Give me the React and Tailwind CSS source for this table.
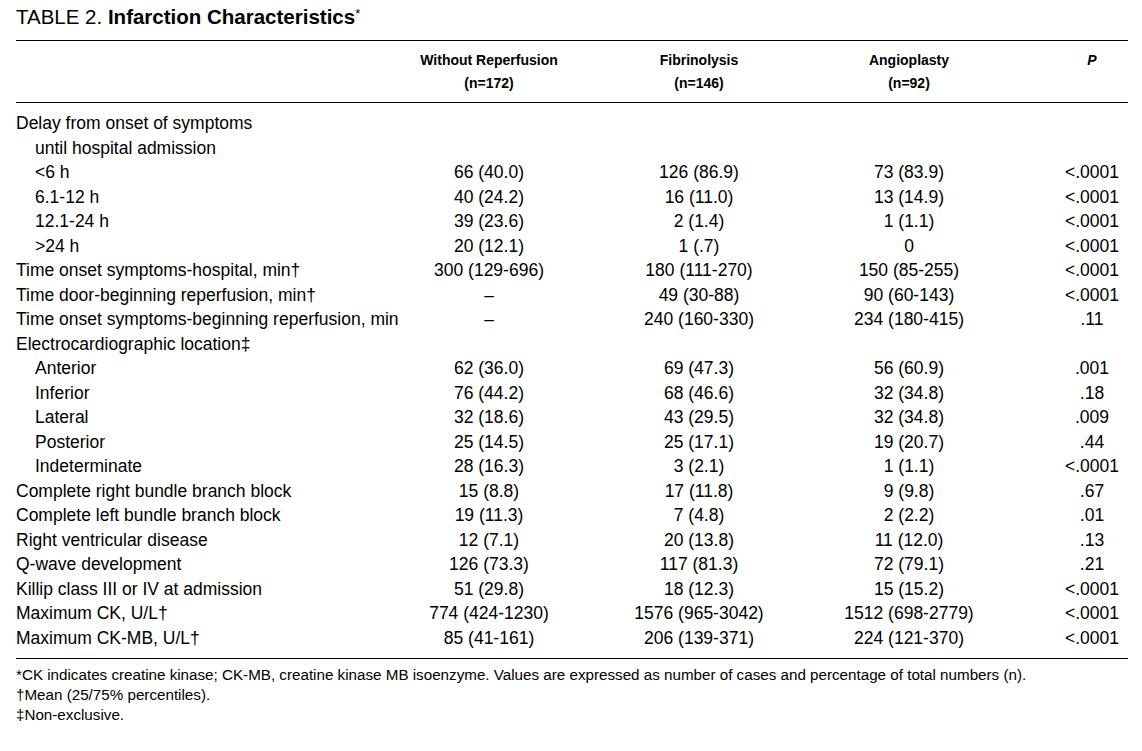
const ROWS = [
  { label: "Delay from onset of symptoms" },
  { label: "until hospital admission", indent: true },
  { label: "<6 h", indent: true, v: ["66 (40.0)", "126 (86.9)", "73 (83.9)", "<.0001"] },
  { label: "6.1-12 h", indent: true, v: ["40 (24.2)", "16 (11.0)", "13 (14.9)", "<.0001"] },
  { label: "12.1-24 h", indent: true, v: ["39 (23.6)", "2 (1.4)", "1 (1.1)", "<.0001"] },
  { label: ">24 h", indent: true, v: ["20 (12.1)", "1 (.7)", "0", "<.0001"] },
  { label: "Time onset symptoms-hospital, min†", v: ["300 (129-696)", "180 (111-270)", "150 (85-255)", "<.0001"] },
  { label: "Time door-beginning reperfusion, min†", v: ["–", "49 (30-88)", "90 (60-143)", "<.0001"] },
  { label: "Time onset symptoms-beginning reperfusion, min", v: ["–", "240 (160-330)", "234 (180-415)", ".11"] },
  { label: "Electrocardiographic location‡" },
  { label: "Anterior", indent: true, v: ["62 (36.0)", "69 (47.3)", "56 (60.9)", ".001"] },
  { label: "Inferior", indent: true, v: ["76 (44.2)", "68 (46.6)", "32 (34.8)", ".18"] },
  { label: "Lateral", indent: true, v: ["32 (18.6)", "43 (29.5)", "32 (34.8)", ".009"] },
  { label: "Posterior", indent: true, v: ["25 (14.5)", "25 (17.1)", "19 (20.7)", ".44"] },
  { label: "Indeterminate", indent: true, v: ["28 (16.3)", "3 (2.1)", "1 (1.1)", "<.0001"] },
  { label: "Complete right bundle branch block", v: ["15 (8.8)", "17 (11.8)", "9 (9.8)", ".67"] },
  { label: "Complete left bundle branch block", v: ["19 (11.3)", "7 (4.8)", "2 (2.2)", ".01"] },
  { label: "Right ventricular disease", v: ["12 (7.1)", "20 (13.8)", "11 (12.0)", ".13"] },
  { label: "Q-wave development", v: ["126 (73.3)", "117 (81.3)", "72 (79.1)", ".21"] },
  { label: "Killip class III or IV at admission", v: ["51 (29.8)", "18 (12.3)", "15 (15.2)", "<.0001"] },
  { label: "Maximum CK, U/L†", v: ["774 (424-1230)", "1576 (965-3042)", "1512 (698-2779)", "<.0001"] },
  { label: "Maximum CK-MB, U/L†", v: ["85 (41-161)", "206 (139-371)", "224 (121-370)", "<.0001"] },
];

const GRID = "grid grid-cols-[368px_210px_210px_210px_1fr]";

export default function App() {
  return (
    <div className="min-h-[751px] w-[1142px] bg-white px-4 pt-[5px] font-['Liberation_Sans',Arial,sans-serif] text-black">
      <h1 className="text-[20.5px] leading-6">
        TABLE 2. <span className="font-bold">Infarction Characteristics</span>
        <sup className="text-[13px]">*</sup>
      </h1>

      <div className="mt-[11px] w-[1112px] border-t-[1.5px] border-black">
        {/* column heads */}
        <div className={`${GRID} border-b-[1.5px] border-black pt-2 pb-[7px] text-[14px] font-bold leading-[23px]`}>
          <div />
          <div className="text-center">
            Without Reperfusion
            <br />
            (n=172)
          </div>
          <div className="text-center">
            Fibrinolysis
            <br />
            (n=146)
          </div>
          <div className="text-center">
            Angioplasty
            <br />
            (n=92)
          </div>
          <div className="pl-[42px] text-center italic">P</div>
        </div>

        {/* body */}
        <div className="border-b-[1.5px] border-black py-2 text-[17.5px] leading-[24.5px]">
          {ROWS.map((row) => (
            <div key={row.label} className={`${GRID} h-[24.5px]`}>
              <div className={`whitespace-nowrap ${row.indent ? "pl-[19px]" : ""}`}>{row.label}</div>
              {row.v ? (
                <>
                  <div className="text-center">{row.v[0]}</div>
                  <div className="text-center">{row.v[1]}</div>
                  <div className="text-center">{row.v[2]}</div>
                  <div className="pl-[42px] text-center">{row.v[3]}</div>
                </>
              ) : null}
            </div>
          ))}
        </div>
      </div>

      <div className="mt-[6px] text-[15.2px] leading-5">
        <p>
          *CK indicates creatine kinase; CK-MB, creatine kinase MB isoenzyme. Values are expressed as number of
          cases and percentage of total numbers (n).
        </p>
        <p>†Mean (25/75% percentiles).</p>
        <p>‡Non-exclusive.</p>
      </div>
    </div>
  );
}
